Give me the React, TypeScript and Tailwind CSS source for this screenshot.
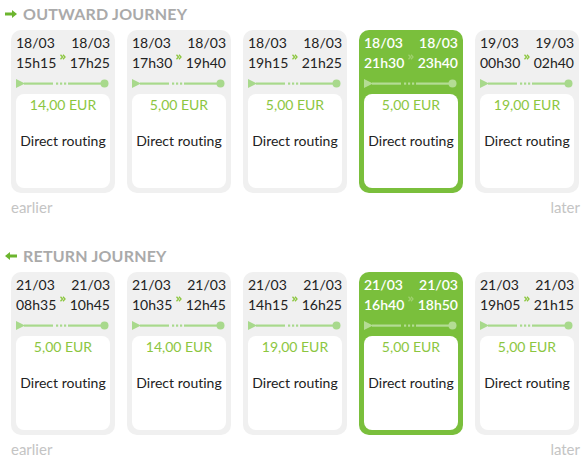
import React from "react";

type Trip = {
  d1: string;
  t1: string;
  d2: string;
  t2: string;
  price: string;
  selected?: boolean;
};

const outward: Trip[] = [
  { d1: "18/03", t1: "15h15", d2: "18/03", t2: "17h25", price: "14,00 EUR" },
  { d1: "18/03", t1: "17h30", d2: "18/03", t2: "19h40", price: "5,00 EUR" },
  { d1: "18/03", t1: "19h15", d2: "18/03", t2: "21h25", price: "5,00 EUR" },
  { d1: "18/03", t1: "21h30", d2: "18/03", t2: "23h40", price: "5,00 EUR", selected: true },
  { d1: "19/03", t1: "00h30", d2: "19/03", t2: "02h40", price: "19,00 EUR" },
];

const returns: Trip[] = [
  { d1: "21/03", t1: "08h35", d2: "21/03", t2: "10h45", price: "5,00 EUR" },
  { d1: "21/03", t1: "10h35", d2: "21/03", t2: "12h45", price: "14,00 EUR" },
  { d1: "21/03", t1: "14h15", d2: "21/03", t2: "16h25", price: "19,00 EUR" },
  { d1: "21/03", t1: "16h40", d2: "21/03", t2: "18h50", price: "5,00 EUR", selected: true },
  { d1: "21/03", t1: "19h05", d2: "21/03", t2: "21h15", price: "5,00 EUR" },
];

function Timeline({ selected }: { selected?: boolean }) {
  const c = selected ? "#b4dc94" : "#a8d98c";
  return (
    <svg width="93" height="9" viewBox="0 0 93 9" className="block">
      <polygon points="0,0 9,4.5 0,9" fill={c} />
      <rect x="8" y="3.5" width="29" height="2.2" fill={c} />
      <rect x="40" y="3.5" width="2.2" height="2.2" fill={c} />
      <rect x="44" y="3.5" width="2.2" height="2.2" fill={c} />
      <rect x="48" y="3.5" width="2.2" height="2.2" fill={c} />
      <rect x="52" y="3.5" width="36" height="2.2" fill={c} />
      <circle cx="88.5" cy="4.5" r="4" fill={c} />
    </svg>
  );
}

function Chevron({ selected }: { selected?: boolean }) {
  const c = selected ? "#9fd06f" : "#8cc63f";
  return (
    <svg width="6" height="6" viewBox="0 0 6 6" className="block">
      <path d="M0.5 0.8 L2.5 3 L0.5 5.2 M3 0.8 L5 3 L3 5.2" fill="none" stroke={c} strokeWidth="1.3" />
    </svg>
  );
}

function Card({ trip }: { trip: Trip }) {
  const sel = trip.selected;
  return (
    <div
      className={`flex h-[163px] w-[104px] flex-col rounded-[10px] px-[5px] pb-[5px] pt-[3px] ${
        sel ? "bg-[#7abf3c] text-white font-semibold" : "bg-[#f0f0f0] text-[#222]"
      }`}
    >
      <div className="flex items-center justify-between text-[14px] leading-[20px]">
        <div>
          <div>{trip.d1}</div>
          <div>{trip.t1}</div>
        </div>
        <div className="mt-[8px]">
          <Chevron selected={sel} />
        </div>
        <div className="text-right">
          <div>{trip.d2}</div>
          <div>{trip.t2}</div>
        </div>
      </div>
      <div className="mt-[6px] mb-[6px]">
        <Timeline selected={sel} />
      </div>
      <div className="flex flex-1 flex-col items-center rounded-[8px] bg-white pt-[1px] font-normal">
        <div className="text-[14px] leading-[20px] text-[#8cc63f]">{trip.price}</div>
        <div className="mt-[16px] text-[14px] leading-[20px] text-[#222]">Direct routing</div>
      </div>
    </div>
  );
}

function Section({
  title,
  trips,
  dir,
}: {
  title: string;
  trips: Trip[];
  dir: "right" | "left";
}) {
  return (
    <div>
      <div className="flex h-[28px] items-center pl-[5px]">
        <svg width="12" height="8" viewBox="0 0 12 8" className="mr-[6px]">
          {dir === "right" ? (
            <path d="M0 2.6 H7 V0 L12 4 L7 8 V5.4 H0 Z" fill="#6cb52e" />
          ) : (
            <path d="M12 2.6 H5 V0 L0 4 L5 8 V5.4 H12 Z" fill="#6cb52e" />
          )}
        </svg>
        <span className="text-[16px] font-bold uppercase tracking-[0.2px] text-[#aaaaaa]">{title}</span>
      </div>
      <div className="flex gap-[12px] pl-[11px] pt-[2px]">
        {trips.map((t, i) => (
          <Card key={i} trip={t} />
        ))}
      </div>
      <div className="flex justify-between pl-[11px] pr-[5px] pt-[4px] text-[15px] leading-[20px] text-[#c4c4c4]">
        <span>earlier</span>
        <span>later</span>
      </div>
    </div>
  );
}

export default function App() {
  return (
    <div
      className="h-[461px] w-[585px] bg-white"
      style={{ fontFamily: "Lato, 'Open Sans', sans-serif", fontVariantLigatures: "none" }}
    >
      <Section title="Outward journey" trips={outward} dir="right" />
      <div className="h-[25px]" />
      <Section title="Return journey" trips={returns} dir="left" />
    </div>
  );
}
